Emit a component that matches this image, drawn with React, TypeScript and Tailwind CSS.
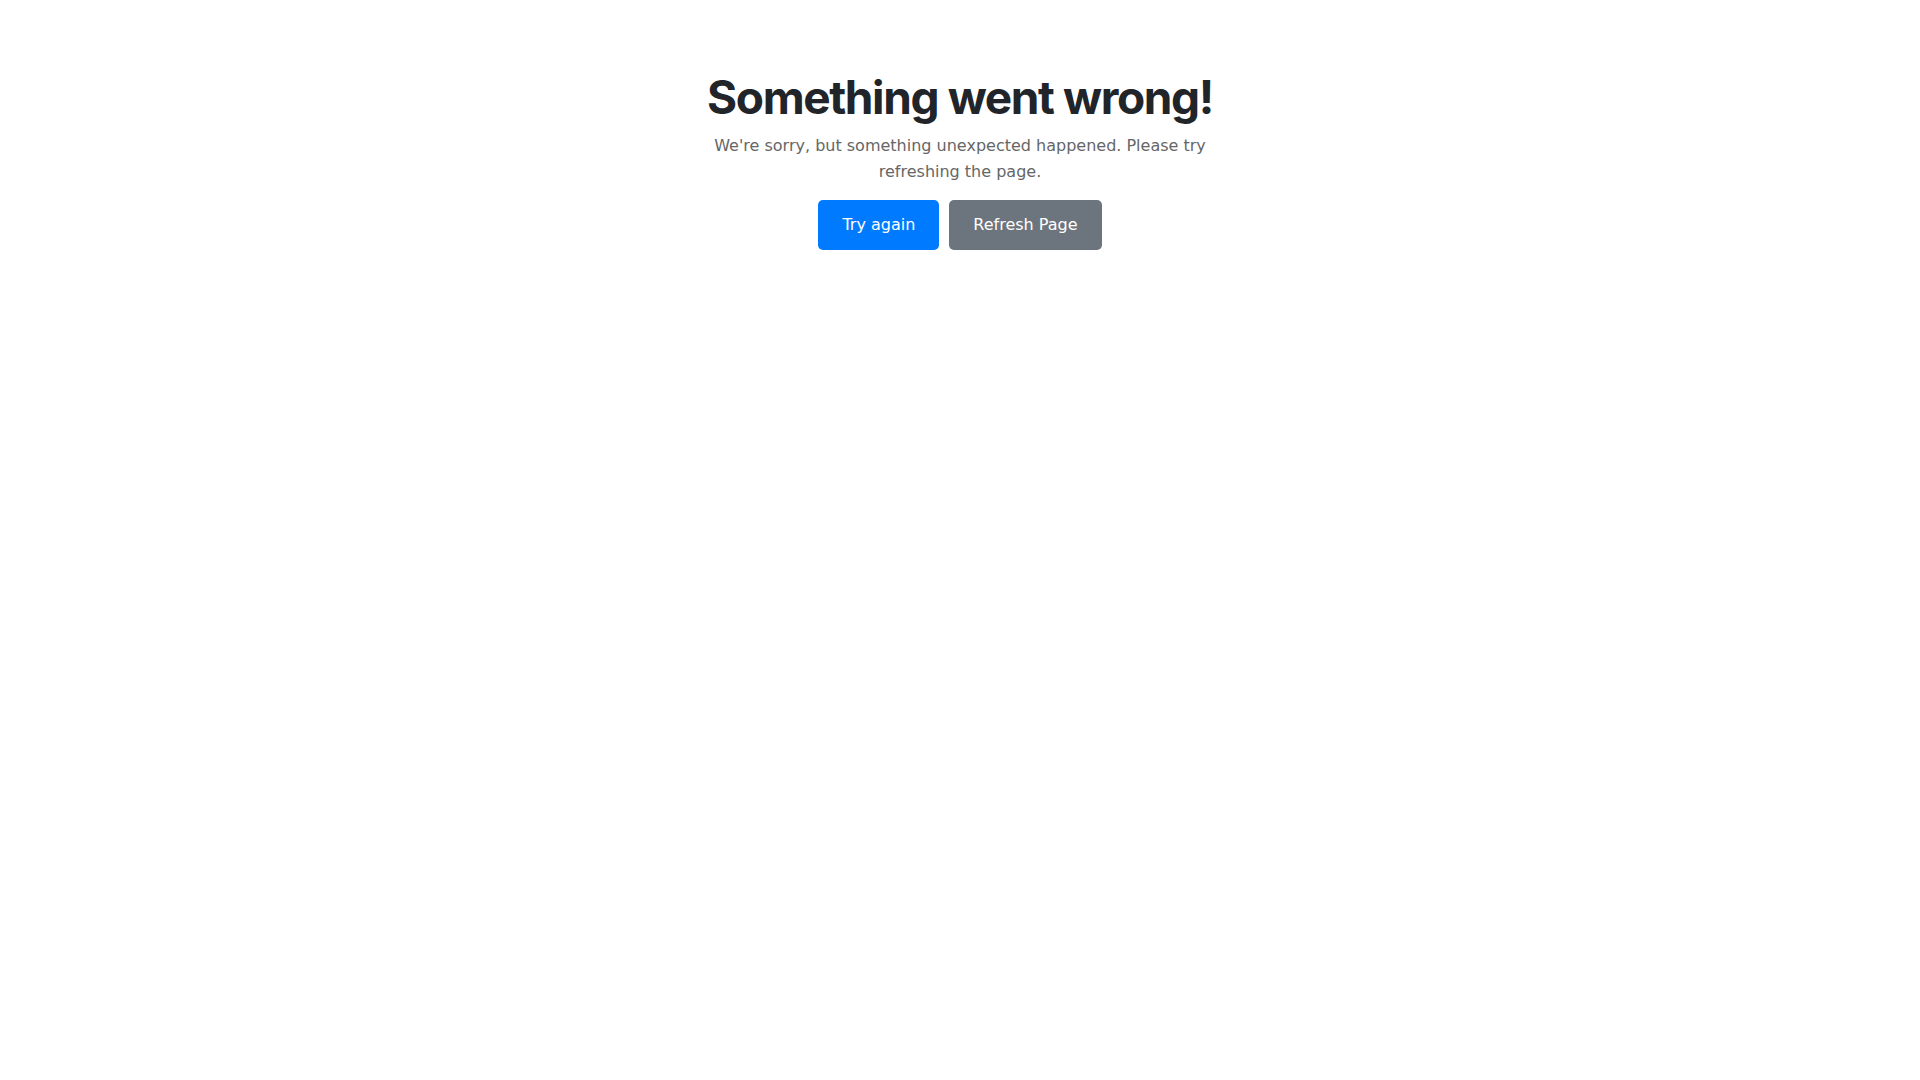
export default function App() {
  return (
    <div className="min-h-screen bg-white">
      <div className="flex flex-col items-center px-4 pt-[70px] text-center">
        <h1 className="font-['Inter',sans-serif] text-[46px] font-bold leading-[1.2] tracking-[-0.03em] text-[#212529]">
          Something went wrong!
        </h1>
        <p className="mt-2 max-w-lg font-['DejaVu_Sans',sans-serif] text-base leading-[1.6] text-[#666]">
          We're sorry, but something unexpected happened. Please try refreshing the page.
        </p>
        <div className="mt-4 flex gap-2.5 font-['DejaVu_Sans',sans-serif] text-base leading-[1.6] text-white">
          <button className="rounded-[5px] bg-[#007bff] px-6 py-3">Try again</button>
          <button className="rounded-[5px] bg-[#6c757d] px-6 py-3">Refresh Page</button>
        </div>
      </div>
    </div>
  );
}
